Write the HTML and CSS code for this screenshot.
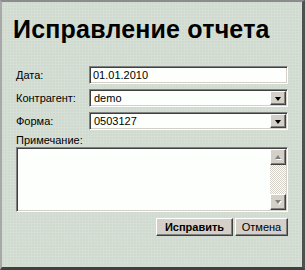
FILE: index.html
```html
<!DOCTYPE html>
<html lang="ru">
<head>
<meta charset="utf-8">
<title>Исправление отчета</title>
<link rel="stylesheet" href="styles.css">
</head>
<body>
<div class="frame">
  <h1 class="title">Исправление отчета</h1>
  <div class="form">
    <div class="label">Дата:</div>
    <div class="field"><span class="value">01.01.2010</span></div>
    <div class="label">Контрагент:</div>
    <div class="field select"><span class="value">demo</span><span class="drop"><span class="arrow-down"></span></span></div>
    <div class="label">Форма:</div>
    <div class="field select"><span class="value">0503127</span><span class="drop"><span class="arrow-down"></span></span></div>
  </div>
  <div class="note-label">Примечание:</div>
  <div class="field memo">
    <div class="memo-text"></div>
    <div class="scrollbar">
      <span class="sbtn"><span class="arrow-up-dis"></span></span>
      <span class="track"></span>
      <span class="sbtn"><span class="arrow-down-dis"></span></span>
    </div>
  </div>
  <div class="actions">
    <div class="btn primary">Исправить</div>
    <div class="btn cancel">Отмена</div>
  </div>
</div>
</body>
</html>
```

FILE: styles.css
```css
html, body {
  margin: 0;
  padding: 0;
}

.frame {
  box-sizing: border-box;
  width: 305px;
  height: 270px;
  border-style: solid;
  border-width: 2px 3px 3px 2px;
  border-color: #8c8c8c #505050 #404040 #a8a8a8;
  background-color: #d6dfd5;
  background-image: radial-gradient(circle at 1px 1px, #cdd6cb 0.6px, transparent 0.9px);
  background-size: 3px 3px;
  font-family: "Liberation Sans", Arial, sans-serif;
  font-size: 11px;
  color: #000;
  padding: 12px 14px 0 14px;
}

.title {
  margin: 0 0 0 -3px;
  font-size: 25px;
  line-height: 30px;
  font-weight: bold;
  letter-spacing: 0.2px;
}

.form {
  margin-top: 22px;
  display: grid;
  grid-template-columns: 73px 1fr;
  row-gap: 5px;
  align-items: center;
}

.label, .note-label {
  line-height: 13px;
}

.field {
  box-sizing: border-box;
  height: 18px;
  display: flex;
  align-items: center;
  background: #fcfffc;
  border: 1px solid;
  border-color: #808080 #ffffff #ffffff #808080;
  box-shadow: inset 1px 1px #404040, inset -1px -1px #d4d0c8;
}

.value {
  flex: 1;
  padding-left: 3px;
  line-height: 14px;
}

.select {
  padding: 1px;
}

.drop {
  box-sizing: border-box;
  width: 16px;
  height: 14px;
  display: flex;
  align-items: center;
  justify-content: center;
  background: #d4d0c8;
  border: 1px solid;
  border-color: #ffffff #404040 #404040 #ffffff;
  box-shadow: inset -1px -1px #808080;
}

.arrow-down {
  width: 0;
  height: 0;
  border-left: 3.5px solid transparent;
  border-right: 3.5px solid transparent;
  border-top: 4px solid #000;
  margin-top: 1px;
}

.note-label {
  margin-top: 4px;
}

.memo {
  height: 65px;
  align-items: stretch;
  padding: 1px;
}

.memo-text {
  flex: 1;
}

.scrollbar {
  width: 16px;
  display: flex;
  flex-direction: column;
}

.track {
  flex: 1;
  background-color: #ffffff;
  background-image: conic-gradient(#d4d0c8 25%, #ffffff 0 50%, #d4d0c8 0 75%, #ffffff 0);
  background-size: 2px 2px;
}

.sbtn {
  box-sizing: border-box;
  height: 16px;
  display: flex;
  align-items: center;
  justify-content: center;
  background: #d4d0c8;
  border: 1px solid;
  border-color: #ffffff #404040 #404040 #ffffff;
  box-shadow: inset -1px -1px #808080;
}

.arrow-up-dis {
  width: 0;
  height: 0;
  border-left: 3.5px solid transparent;
  border-right: 3.5px solid transparent;
  border-bottom: 4px solid #808080;
  filter: drop-shadow(1px 1px 0 #ffffff);
}

.arrow-down-dis {
  width: 0;
  height: 0;
  border-left: 3.5px solid transparent;
  border-right: 3.5px solid transparent;
  border-top: 4px solid #808080;
  filter: drop-shadow(1px 1px 0 #ffffff);
}

.actions {
  margin-top: 6px;
  display: flex;
  justify-content: flex-end;
  gap: 2px;
}

.btn {
  box-sizing: border-box;
  height: 18px;
  display: flex;
  align-items: center;
  justify-content: center;
  background: #d4d0c8;
  border: 1px solid;
  border-color: #ffffff #404040 #404040 #ffffff;
  box-shadow: inset -1px -1px #808080;
  line-height: 14px;
}

.primary {
  width: 77px;
  font-weight: bold;
}

.cancel {
  width: 53px;
}
```
